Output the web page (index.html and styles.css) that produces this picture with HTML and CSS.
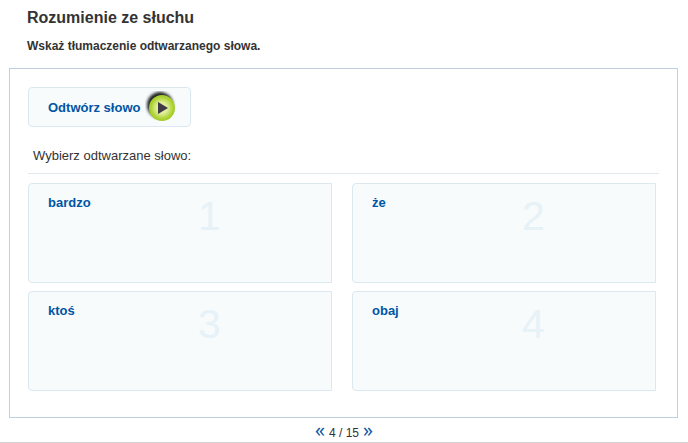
FILE: index.html
```html
<!DOCTYPE html>
<html lang="pl">

<head>
    <title>Rozumienie ze słuchu</title>
    <meta charset="utf-8">
    <link rel="stylesheet" href="styles.css">
</head>

<body>
    <div class="exercise">
        <div class="header">
            <h1>Rozumienie ze słuchu</h1>
            <h2>Wskaż tłumaczenie odtwarzanego słowa.</h2>
        </div>
        <div class="box">
            <button type="button" class="play">
                <span>Odtwórz słowo</span>
                <svg class="play-icon" width="32" height="32" viewBox="0 0 32 32" aria-hidden="true">
                    <defs>
                        <radialGradient id="green" cx="0.5" cy="0.5" r="0.5">
                            <stop offset="0" stop-color="#f0f8c8" />
                            <stop offset="0.45" stop-color="#dcec94" />
                            <stop offset="0.85" stop-color="#abd22f" />
                            <stop offset="1" stop-color="#a3cc2c" />
                        </radialGradient>
                        <filter id="soft" x="-20%" y="-20%" width="140%" height="140%">
                            <feGaussianBlur stdDeviation="1.4" />
                        </filter>
                    </defs>
                    <circle cx="15" cy="14" r="13" fill="#222" filter="url(#soft)" />
                    <circle cx="17" cy="17" r="13" fill="url(#green)" />
                    <path d="M13 11v12l10-6z" fill="#403a42" />
                </svg>
            </button>
            <p class="hint">Wybierz odtwarzane słowo:</p>
            <div class="answers">
                <button type="button" class="answer">
                    <span class="word">bardzo</span>
                    <span class="number">1</span>
                </button>
                <button type="button" class="answer">
                    <span class="word">że</span>
                    <span class="number">2</span>
                </button>
                <button type="button" class="answer">
                    <span class="word">ktoś</span>
                    <span class="number">3</span>
                </button>
                <button type="button" class="answer">
                    <span class="word">obaj</span>
                    <span class="number">4</span>
                </button>
            </div>
        </div>
        <div class="pager">
            <a href="#prev">«</a>
            <span>4 / 15</span>
            <a href="#next">»</a>
        </div>
    </div>
</body>

</html>
```
FILE: styles.css
```css
body {
    margin: 0;
    background-color: #fff;
    color: #333;
    font-family: "Liberation Sans", Arial, sans-serif;
    font-size: 13px;
}

button {
    font-family: inherit;
    cursor: pointer;
}

.exercise {
    border-bottom: 1px solid #d3d3d3;
}

.header {
    padding: 8px 27px 13px;
}

.header h1 {
    margin: 0;
    font-size: 16px;
    line-height: 20px;
}

.header h2 {
    margin: 9px 0 0;
    font-size: 12px;
    line-height: 18px;
}

.box {
    margin: 0 10px 0 9px;
    padding: 18px 18px 26px;
    border: 1px solid #c0cfdf;
}

.play {
    display: flex;
    align-items: center;
    gap: 5px;
    height: 40px;
    padding: 0 13px 0 19px;
    border: 1px solid #dce8f0;
    border-radius: 4px;
    background-color: #f7fbfc;
    color: #0055a5;
    font-size: 13px;
    font-weight: bold;
}

.hint {
    margin: 16px 0 9px;
    padding: 4px 5px 9px;
    border-bottom: 1px solid #e1e9ed;
    font-size: 13px;
    line-height: 17px;
}

.answers {
    display: grid;
    grid-template-columns: 1fr 1fr;
    gap: 8px 20px;
    padding-right: 3px;
}

.answer {
    display: flex;
    align-items: flex-start;
    height: 100px;
    padding: 10px 19px;
    border: 1px solid #dce8f0;
    border-radius: 4px 0 0 4px;
    background-color: #f7fbfc;
    text-align: left;
}

.word {
    width: 150px;
    color: #0055a5;
    font-size: 13px;
    font-weight: bold;
    line-height: 18px;
}

.number {
    color: #e6f2f7;
    font-size: 41px;
    line-height: 44px;
}

.pager {
    display: flex;
    justify-content: center;
    align-items: baseline;
    gap: 4px;
    height: 23px;
    padding-top: 1px;
    font-size: 12px;
}

.pager a {
    color: #0055a5;
    font-family: "Open Sans", sans-serif;
    font-size: 20px;
    line-height: 22px;
    text-decoration: none;
}
```
